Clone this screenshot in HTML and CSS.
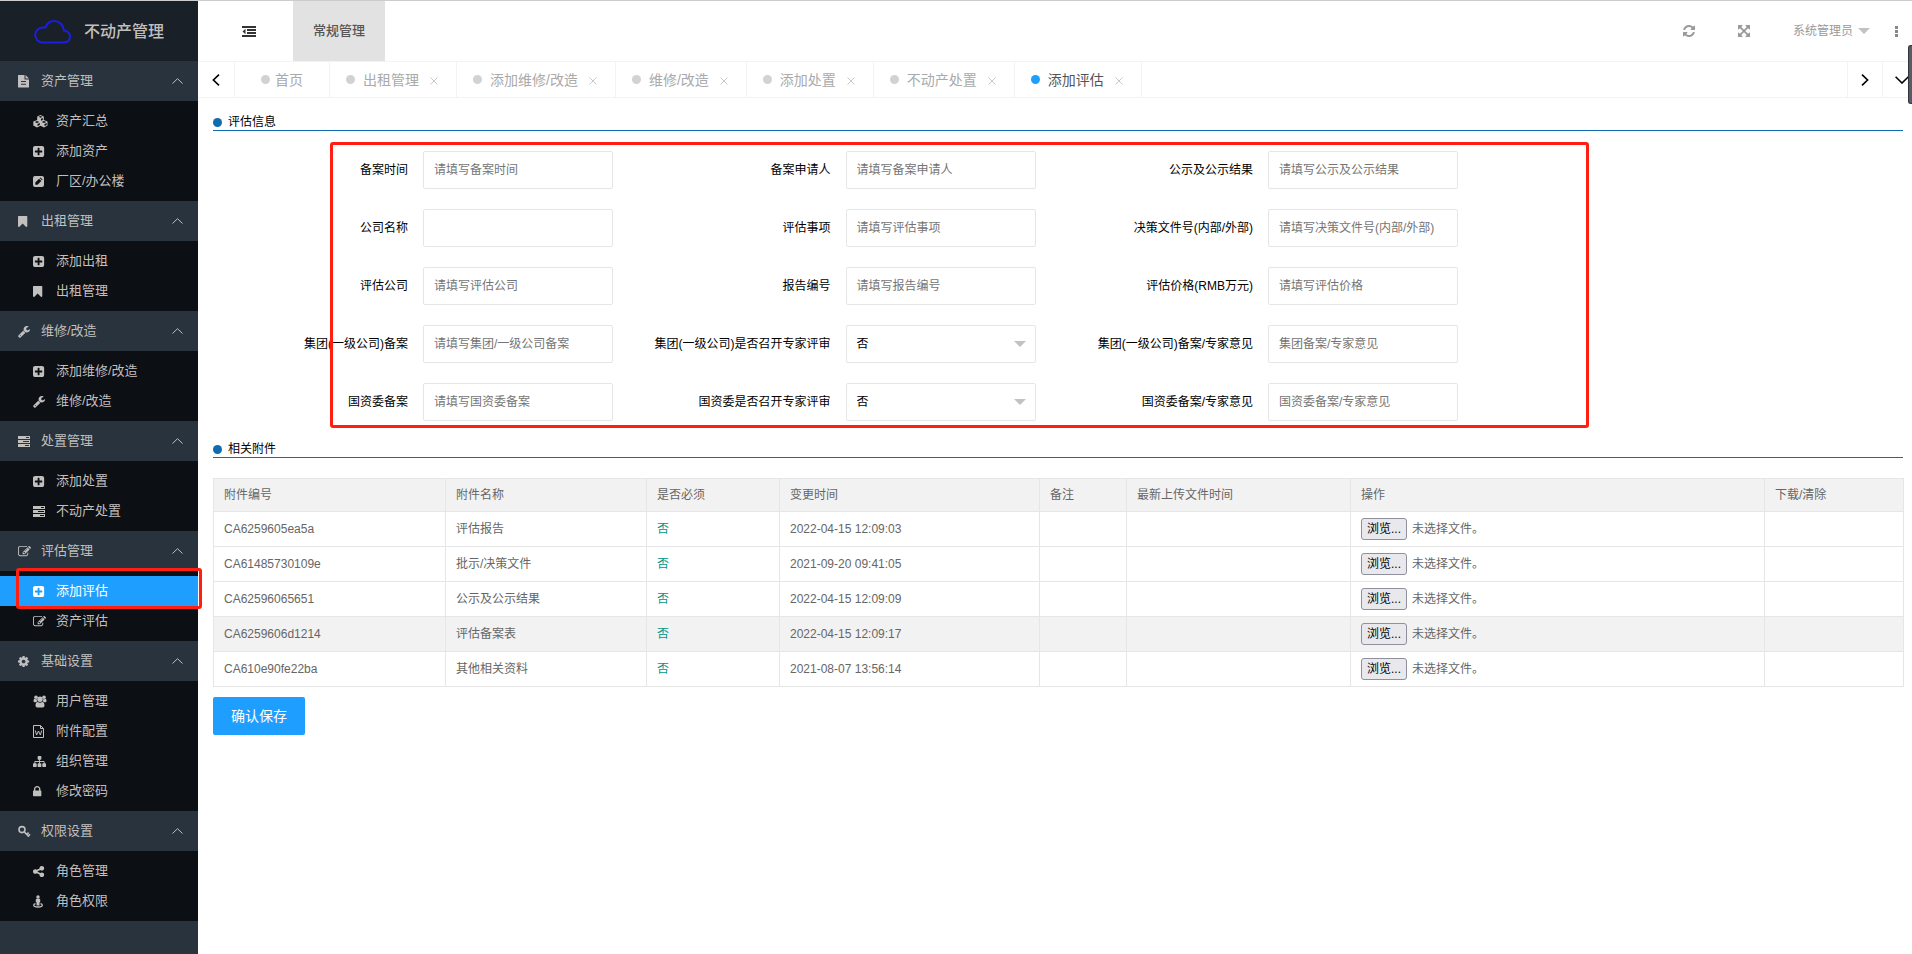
FILE: index.html
```html
<!DOCTYPE html>
<html lang="zh-CN">
<head>
<meta charset="utf-8">
<title>不动产管理</title>
<link rel="stylesheet" href="styles.css">
</head>
<body>
<svg class="sprite" aria-hidden="true">
  <symbol id="i-file" viewBox="0 0 13 13"><path fill-rule="evenodd" d="M0 .5Q0 0 .5 0H6.500V4Q6.500 4.500 7 4.500H11V12Q11 12.500 10.500 12.500H.5Q0 12.500 0 12zM7.500 0L11 3.500H7.500zM3 6V7H8V6zM3 8.800V9.800H8V8.800z"/></symbol>
  <symbol id="i-cubes" viewBox="0 0 15 13"><path fill-rule="evenodd" d="M7.500 0L10.800 1.400V5L14.500 6.600V10.500L11 12.400L7.500 10.700L4 12.400L.3 10.500V6.600L4.200 5V1.400zM7.500 1L5.500 1.800L7.500 2.700L9.500 1.800zM8 3.800V5.800L9.800 5V3zM4 5.900L1.800 6.900L4 7.900L6.200 6.900zM11 5.900L8.800 6.900L11 7.900L13.200 6.900zM4.500 8.900V11L6.800 9.900V7.900zM11.500 8.900V11L13.700 9.900V7.900z"/></symbol>
  <symbol id="i-plus" viewBox="128 0 1792 1792"><path d="M1408 960v-128q0-26-19-45t-45-19h-320v-320q0-26-19-45t-45-19h-128q-26 0-45 19t-19 45v320h-320q-26 0-45 19t-19 45v128q0 26 19 45t45 19h320v320q0 26 19 45t45 19h128q26 0 45-19t19-45v-320h320q26 0 45-19t19-45zm256-544v960q0 119-84.500 203.500t-203.500 84.500h-960q-119 0-203.500-84.500t-84.500-203.500v-960q0-119 84.500-203.500t203.500-84.500h960q119 0 203.500 84.500t84.500 203.500z"/></symbol>
  <symbol id="i-pencil" viewBox="0 0 13 13"><path fill-rule="evenodd" d="M2 1H9Q11 1 11 3V10Q11 12 9 12H2Q0 12 0 10V3Q0 1 2 1zM2.300 7.500V9.700H4.500L8.300 5.900L6.100 3.700zM6.700 3.100L8.900 5.300L9.600 4.600L7.400 2.400z"/></symbol>
  <symbol id="i-bookmark" viewBox="256 0 1792 1792"><path d="M1420 128q23 0 44 9 33 13 52.500 41t19.500 62v1289q0 34-19.500 62t-52.500 41q-19 8-44 8-48 0-83-32l-441-424-441 424q-36 33-83 33-23 0-44-9-33-13-52.500-41t-19.500-62v-1289q0-34 19.500-62t52.500-41q21-9 44-9h1048z"/></symbol>
  <symbol id="i-wrench" viewBox="64 0 1792 1792"><path d="M448 1472q0-26-19-45t-45-19-45 19-19 45 19 45 45 19 45-19 19-45zm644-420l-682 682q-37 37-90 37-52 0-91-37l-106-108q-38-36-38-90 0-53 38-91l681-681q39 98 114.500 173.500t173.500 114.500zm634-435q0 39-23 106-47 134-164.500 217.500t-258.500 83.500q-185 0-316.500-131.500t-131.500-316.500 131.500-316.500 316.500-131.500q58 0 121.500 16.500t107.500 46.500q16 11 16 28t-16 28l-293 169v224l193 107q5-3 79-48.500t135.500-81 70.500-35.500q15 0 23.500 10t8.500 25z"/></symbol>
  <symbol id="i-tasks" viewBox="0 0 13 13"><path fill-rule="evenodd" d="M0 1H12V4H0zM0 5H12V8H0zM0 9H12V12H0zM8 2V3H11V2zM5 6V7H11V6zM7 10V11H11V10z"/></symbol>
  <symbol id="i-edit" viewBox="0 0 1792 1792"><path d="M888 1184l116-116-152-152-116 116v56h96v96h56zm440-720q-16-16-33 1l-350 350q-17 17-1 33t33-1l350-350q17-17 1-33zm80 594v190q0 119-84.500 203.500t-203.500 84.500h-832q-119 0-203.500-84.500t-84.500-203.500v-832q0-119 84.500-203.500t203.500-84.500h832q63 0 117 25 15 7 18 23 3 17-9 29l-49 49q-14 14-32 8-23-6-45-6h-832q-66 0-113 47t-47 113v832q0 66 47 113t113 47h832q66 0 113-47t47-113v-126q0-13 9-22l64-64q15-15 35-7t20 29zm-96-738l288 288-672 672h-288v-288zm444 132l-92 92-288-288 92-92q28-28 68-28t68 28l152 152q28 28 28 68t-28 68z"/></symbol>
  <symbol id="i-cog" viewBox="128 0 1792 1792"><path d="M1152 896q0-106-75-181t-181-75-181 75-75 181 75 181 181 75 181-75 75-181zm512-109v222q0 12-8 23t-20 13l-185 28q-19 54-39 91 35 50 107 138 10 12 10 25t-9 23q-27 37-99 108t-94 71q-12 0-26-9l-138-108q-44 23-91 38-16 136-29 186-7 28-36 28h-222q-14 0-24.500-8.500t-11.500-21.500l-28-184q-49-16-90-37l-141 107q-10 9-25 9-14 0-25-11-126-114-165-168-7-10-7-23 0-12 8-23 15-21 51-66.500t54-70.500q-27-50-41-99l-183-27q-13-2-21-12.500t-8-23.500v-222q0-12 8-23t19-13l186-28q14-46 39-92-40-57-107-138-10-12-10-24 0-10 9-23 26-36 98.500-107.500t94.500-71.500q13 0 26 10l138 107q44-23 91-38 16-136 29-186 7-28 36-28h222q14 0 24.500 8.500t11.500 21.500l28 184q49 16 90 37l142-107q9-9 24-9 13 0 25 10 129 119 165 170 7 8 7 22 0 12-8 23-15 21-51 66.500t-54 70.500q26 50 41 98l183 28q13 2 21 12.500t8 23.500z"/></symbol>
  <symbol id="i-users" viewBox="0 0 14 13"><circle cx="6.500" cy="4.300" r="2.700"/><circle cx="2.500" cy="2.200" r="1.800"/><circle cx="10.500" cy="2.200" r="1.800"/><path d="M2 10.500C2 8 3 7 4.200 7Q6.500 8.600 8.800 7C10 7 11 8 11 10.500Q11 12.500 9.300 12.500H3.700Q2 12.500 2 10.500zM0 6Q0 3.800 1 3.800Q2.200 4.500 3.300 4.200Q3.300 5.500 4 6.400Q3 6.400 2.200 7.200H1.200Q0 7.200 0 6zM13 6Q13 3.800 12 3.800Q10.800 4.500 9.700 4.200Q9.700 5.500 9 6.400Q10 6.400 10.800 7.200H11.800Q13 7.200 13 6z"/></symbol>
  <symbol id="i-word" viewBox="0 0 13 13"><path fill="none" stroke="currentColor" d="M.5 .5H7.500L10.500 3.500V12.500H.5zM7.500 .5V3.500H10.500M2.300 5.500L3.600 10L5.500 6L7.400 10L8.700 5.500"/></symbol>
  <symbol id="i-sitemap" viewBox="0 0 1792 1792"><path d="M1792 1248v320q0 40-28 68t-68 28h-320q-40 0-68-28t-28-68v-320q0-40 28-68t68-28h96v-192h-512v192h96q40 0 68 28t28 68v320q0 40-28 68t-68 28h-320q-40 0-68-28t-28-68v-320q0-40 28-68t68-28h96v-192h-512v192h96q40 0 68 28t28 68v320q0 40-28 68t-68 28h-320q-40 0-68-28t-28-68v-320q0-40 28-68t68-28h96v-192q0-52 38-90t90-38h512v-192h-96q-40 0-68-28t-28-68v-320q0-40 28-68t68-28h320q40 0 68 28t28 68v320q0 40-28 68t-68 28h-96v192h512q52 0 90 38t38 90v192h96q40 0 68 28t28 68z"/></symbol>
  <symbol id="i-lock" viewBox="320 0 1792 1792"><path d="M640 768h512v-192q0-106-75-181t-181-75-181 75-75 181v192zm832 96v576q0 40-28 68t-68 28h-960q-40 0-68-28t-28-68v-576q0-40 28-68t68-28h32v-192q0-184 132-316t316-132 316 132 132 316v192h32q40 0 68 28t28 68z"/></symbol>
  <symbol id="i-key" viewBox="0 0 13 13"><g fill="none" stroke="currentColor" stroke-width="1.600"><circle cx="4" cy="4.600" r="3"/><path d="M6.100 6.700L11 11.600M10.600 7.600L8.400 9.700M12 9.300L10.200 11.100"/></g></symbol>
  <symbol id="i-share" viewBox="128 0 1792 1792"><path d="M1344 1024q133 0 226.500 93.500t93.500 226.500-93.500 226.500-226.500 93.500-226.500-93.500-93.500-226.500q0-12 2-34l-360-180q-92 86-218 86-133 0-226.500-93.500t-93.500-226.500 93.500-226.500 226.500-93.500q126 0 218 86l360-180q-2-22-2-34 0-133 93.500-226.500t226.500-93.500 226.500 93.500 93.500 226.500-93.500 226.500-226.500 93.500q-126 0-218-86l-360 180q2 22 2 34t-2 34l360 180q92-86 218-86z"/></symbol>
  <symbol id="i-street" viewBox="0 0 13 13"><circle cx="5" cy="2" r="1.700"/><path d="M3.600 3.800H6.400Q7.200 3.800 7.200 4.600V7.300H6.500V10.500H3.500V7.300H2.800V4.600Q2.800 3.800 3.600 3.800z"/><path fill="none" stroke="currentColor" stroke-width="1.300" d="M2.500 8.700Q.7 9.200 .7 10.200C.7 12.600 9.300 12.600 9.300 10.200Q9.300 9.200 7.500 8.700"/></symbol>
  <symbol id="i-outdent" viewBox="0 0 14 12"><path d="M0 0H14V2H0zM5 3H14V5H5zM5 6H14V8H5zM0 9H14V11H0zM3.500 2.800V8.200L.5 5.500z"/></symbol>
  <symbol id="i-refresh" viewBox="128 128 1536 1536"><path d="M1639 1056q0 5-1 7-64 268-268 434.500t-478 166.500q-146 0-282.500-55t-243.500-157l-129 129q-19 19-45 19t-45-19-19-45v-448q0-26 19-45t45-19h448q26 0 45 19t19 45-19 45l-137 137q71 66 161 102t187 36q134 0 250-65t186-179q11-17 53-117 8-23 30-23h192q13 0 22.500 9.500t9.500 22.500zm25-800v448q0 26-19 45t-45 19h-448q-26 0-45-19t-19-45 19-45l138-138q-148-137-349-137-134 0-250 65t-186 179q-11 17-53 117-8 23-30 23h-199q-13 0-22.500-9.500t-9.500-22.500v-7q65-268 270-434.500t480-166.500q146 0 284 55.500t245 156.500l130-129q19-19 45-19t45 19 19 45z"/></symbol>
  <symbol id="i-expand" viewBox="128 128 1536 1536"><path d="M1411 541l-355 355 355 355 144-144q29-31 70-14 39 17 39 59v448q0 26-19 45t-45 19h-448q-42 0-59-40-17-39 14-69l144-144-355-355-355 355 144 144q31 30 14 69-17 40-59 40h-448q-26 0-45-19t-19-45v-448q0-42 40-59 39-17 69 14l144 144 355-355-355-355-144 144q-19 19-45 19-12 0-24-5-40-17-40-59v-448q0-26 19-45t45-19h448q42 0 59 40 17 39-14 69l-144 144 355 355 355-355-144-144q-31-30-14-69 17-40 59-40h448q26 0 45 19t19 45v448q0 42-39 59-13 5-25 5-26 0-45-19z"/></symbol>
  <symbol id="i-up" viewBox="0 0 11 6"><path fill="none" stroke="currentColor" d="M.5 5.500L5.500 .7L10.500 5.500"/></symbol>
  <symbol id="i-left" viewBox="0 0 8 12"><path fill="none" stroke="currentColor" stroke-width="1.600" d="M7 .6L1.400 6L7 11.400"/></symbol>
  <symbol id="i-right" viewBox="0 0 8 12"><path fill="none" stroke="currentColor" stroke-width="1.600" d="M1 .6L6.600 6L1 11.400"/></symbol>
  <symbol id="i-down" viewBox="0 0 14 8"><path fill="none" stroke="currentColor" stroke-width="1.600" d="M.6 .8L7 7L13.400 .8"/></symbol>
  <symbol id="i-close" viewBox="0 0 8 8"><path fill="none" stroke="currentColor" d="M.5 .5L7.500 7.500M7.500 .5L.5 7.500"/></symbol>
</svg>

<div class="app">
  <aside class="sidebar">
    <div class="logo">
      <svg class="cloud" viewBox="0 0 37 24"><path d="M9 22.500A7.500 7.500 0 0 1 8.500 7.500Q10 7 11.500 7.500C13 3.500 16 1 20 1C25.500 1 29.500 5 30 10.500C33.500 11 36 13.500 36 16.600Q36 22.500 29.500 22.500z"/></svg>
      <span>不动产管理</span>
    </div>
    <nav class="menu">
      <a class="group" href="#"><svg class="icon"><use href="#i-file"/></svg><span>资产管理</span><svg class="chevron"><use href="#i-up"/></svg></a>
      <div class="items">
        <a href="#"><svg class="icon wide"><use href="#i-cubes"/></svg>资产汇总</a>
        <a href="#"><svg class="icon"><use href="#i-plus"/></svg>添加资产</a>
        <a href="#"><svg class="icon"><use href="#i-pencil"/></svg>厂区/办公楼</a>
      </div>
      <a class="group" href="#"><svg class="icon"><use href="#i-bookmark"/></svg><span>出租管理</span><svg class="chevron"><use href="#i-up"/></svg></a>
      <div class="items">
        <a href="#"><svg class="icon"><use href="#i-plus"/></svg>添加出租</a>
        <a href="#"><svg class="icon"><use href="#i-bookmark"/></svg>出租管理</a>
      </div>
      <a class="group" href="#"><svg class="icon"><use href="#i-wrench"/></svg><span>维修/改造</span><svg class="chevron"><use href="#i-up"/></svg></a>
      <div class="items">
        <a href="#"><svg class="icon"><use href="#i-plus"/></svg>添加维修/改造</a>
        <a href="#"><svg class="icon"><use href="#i-wrench"/></svg>维修/改造</a>
      </div>
      <a class="group" href="#"><svg class="icon"><use href="#i-tasks"/></svg><span>处置管理</span><svg class="chevron"><use href="#i-up"/></svg></a>
      <div class="items">
        <a href="#"><svg class="icon"><use href="#i-plus"/></svg>添加处置</a>
        <a href="#"><svg class="icon"><use href="#i-tasks"/></svg>不动产处置</a>
      </div>
      <a class="group" href="#"><svg class="icon"><use href="#i-edit"/></svg><span>评估管理</span><svg class="chevron"><use href="#i-up"/></svg></a>
      <div class="items">
        <a class="active" href="#"><svg class="icon"><use href="#i-plus"/></svg>添加评估<i class="mark mark-item"></i></a>
        <a href="#"><svg class="icon"><use href="#i-edit"/></svg>资产评估</a>
      </div>
      <a class="group" href="#"><svg class="icon"><use href="#i-cog"/></svg><span>基础设置</span><svg class="chevron"><use href="#i-up"/></svg></a>
      <div class="items">
        <a href="#"><svg class="icon wide"><use href="#i-users"/></svg>用户管理</a>
        <a href="#"><svg class="icon"><use href="#i-word"/></svg>附件配置</a>
        <a href="#"><svg class="icon"><use href="#i-sitemap"/></svg>组织管理</a>
        <a href="#"><svg class="icon"><use href="#i-lock"/></svg>修改密码</a>
      </div>
      <a class="group" href="#"><svg class="icon"><use href="#i-key"/></svg><span>权限设置</span><svg class="chevron"><use href="#i-up"/></svg></a>
      <div class="items">
        <a href="#"><svg class="icon"><use href="#i-share"/></svg>角色管理</a>
        <a href="#"><svg class="icon"><use href="#i-street"/></svg>角色权限</a>
      </div>
    </nav>
  </aside>

  <div class="page">
    <header class="topbar">
      <button class="fold" type="button" aria-label="收起菜单"><svg><use href="#i-outdent"/></svg></button>
      <a class="module" href="#">常规管理</a>
      <div class="tools">
        <button type="button" aria-label="刷新"><svg><use href="#i-refresh"/></svg></button>
        <button type="button" aria-label="全屏"><svg><use href="#i-expand"/></svg></button>
        <a class="user" href="#">系统管理员<i class="caret"></i></a>
        <button class="more" type="button" aria-label="更多"><i></i><i></i><i></i></button>
      </div>
    </header>

    <div class="tabs">
      <button class="arrow" type="button" aria-label="向左"><svg class="side"><use href="#i-left"/></svg></button>
      <a class="tab home" href="#"><i class="dot"></i>首页</a>
      <a class="tab" href="#"><i class="dot"></i>出租管理<svg class="close"><use href="#i-close"/></svg></a>
      <a class="tab" href="#"><i class="dot"></i>添加维修/改造<svg class="close"><use href="#i-close"/></svg></a>
      <a class="tab" href="#"><i class="dot"></i>维修/改造<svg class="close"><use href="#i-close"/></svg></a>
      <a class="tab" href="#"><i class="dot"></i>添加处置<svg class="close"><use href="#i-close"/></svg></a>
      <a class="tab" href="#"><i class="dot"></i>不动产处置<svg class="close"><use href="#i-close"/></svg></a>
      <a class="tab current" href="#"><i class="dot"></i>添加评估<svg class="close"><use href="#i-close"/></svg></a>
      <button class="arrow next" type="button" aria-label="向右"><svg class="side"><use href="#i-right"/></svg></button>
      <button class="arrow list" type="button" aria-label="标签操作"><svg class="down"><use href="#i-down"/></svg></button>
      <i class="handle"></i>
    </div>

    <main class="content">
      <h2 class="title">评估信息</h2>
      <form class="fields">
        <div class="field"><label for="f1">备案时间</label><input id="f1" type="text" placeholder="请填写备案时间"></div>
        <div class="field"><label for="f2">备案申请人</label><input id="f2" type="text" placeholder="请填写备案申请人"></div>
        <div class="field"><label for="f3">公示及公示结果</label><input id="f3" type="text" placeholder="请填写公示及公示结果"></div>
        <div class="field first"><label for="f4">公司名称</label><input id="f4" type="text"></div>
        <div class="field"><label for="f5">评估事项</label><input id="f5" type="text" placeholder="请填写评估事项"></div>
        <div class="field"><label for="f6">决策文件号(内部/外部)</label><input id="f6" type="text" placeholder="请填写决策文件号(内部/外部)"></div>
        <div class="field first"><label for="f7">评估公司</label><input id="f7" type="text" placeholder="请填写评估公司"></div>
        <div class="field"><label for="f8">报告编号</label><input id="f8" type="text" placeholder="请填写报告编号"></div>
        <div class="field"><label for="f9">评估价格(RMB万元)</label><input id="f9" type="text" placeholder="请填写评估价格"></div>
        <div class="field first"><label for="f10">集团(一级公司)备案</label><input id="f10" type="text" placeholder="请填写集团/一级公司备案"></div>
        <div class="field"><label for="f11">集团(一级公司)是否召开专家评审</label><div class="select"><select id="f11"><option>否</option><option>是</option></select><i class="caret"></i></div></div>
        <div class="field"><label for="f12">集团(一级公司)备案/专家意见</label><input id="f12" type="text" placeholder="集团备案/专家意见"></div>
        <div class="field first"><label for="f13">国资委备案</label><input id="f13" type="text" placeholder="请填写国资委备案"></div>
        <div class="field"><label for="f14">国资委是否召开专家评审</label><div class="select"><select id="f14"><option>否</option><option>是</option></select><i class="caret"></i></div></div>
        <div class="field"><label for="f15">国资委备案/专家意见</label><input id="f15" type="text" placeholder="国资委备案/专家意见"></div>
        <i class="mark mark-form"></i>
      </form>

      <h2 class="title">相关附件</h2>
      <table class="files">
        <colgroup><col class="c-id"><col class="c-name"><col class="c-need"><col class="c-time"><col class="c-note"><col class="c-last"><col class="c-op"><col class="c-down"></colgroup>
        <thead><tr><th>附件编号</th><th>附件名称</th><th>是否必须</th><th>变更时间</th><th>备注</th><th>最新上传文件时间</th><th>操作</th><th>下载/清除</th></tr></thead>
        <tbody>
          <tr><td>CA6259605ea5a</td><td>评估报告</td><td class="no">否</td><td>2022-04-15 12:09:03</td><td></td><td></td><td><div class="upload"><button type="button">浏览...</button><span>未选择文件。</span></div></td><td></td></tr>
          <tr><td>CA61485730109e</td><td>批示/决策文件</td><td class="no">否</td><td>2021-09-20 09:41:05</td><td></td><td></td><td><div class="upload"><button type="button">浏览...</button><span>未选择文件。</span></div></td><td></td></tr>
          <tr><td>CA62596065651</td><td>公示及公示结果</td><td class="no">否</td><td>2022-04-15 12:09:09</td><td></td><td></td><td><div class="upload"><button type="button">浏览...</button><span>未选择文件。</span></div></td><td></td></tr>
          <tr class="hover"><td>CA6259606d1214</td><td>评估备案表</td><td class="no">否</td><td>2022-04-15 12:09:17</td><td></td><td></td><td><div class="upload"><button type="button">浏览...</button><span>未选择文件。</span></div></td><td></td></tr>
          <tr><td>CA610e90fe22ba</td><td>其他相关资料</td><td class="no">否</td><td>2021-08-07 13:56:14</td><td></td><td></td><td><div class="upload"><button type="button">浏览...</button><span>未选择文件。</span></div></td><td></td></tr>
        </tbody>
      </table>
      <button class="save" type="button">确认保存</button>
    </main>
  </div>
</div>
</body>
</html>
```

FILE: styles.css
```css
* { box-sizing: border-box; }
body {
  margin: 0;
  font: 12px/16px "Liberation Sans", "Noto Sans CJK SC", sans-serif;
  color: #000;
  background: #fff;
}
a { color: inherit; text-decoration: none; }
button, input, select { font: inherit; color: inherit; margin: 0; }
button { padding: 0; border: 0; background: none; cursor: pointer; }
svg { display: block; fill: currentColor; flex: none; }
i { display: block; flex: none; }
.sprite { display: none; }

.app {
  display: flex;
  min-height: 100vh;
  border-top: 1px solid #ccc;
}

/* Sidebar */
.sidebar {
  flex: none;
  width: 198px;
  background: #28333e;
  color: #c2bfbf;
}
.logo {
  display: flex;
  align-items: center;
  gap: 13px;
  height: 60px;
  padding: 2px 0 0 34px;
  background: #192027;
  font-size: 16px;
  font-weight: 500;
}
.cloud {
  width: 37px;
  height: 24px;
  fill: none;
  stroke: #1e1ee0;
  stroke-width: 2;
}
.menu { font-size: 13px; }
.menu a { display: flex; align-items: center; }
.group { height: 40px; padding: 0 15px 0 18px; }
.icon { width: 13px; height: 13px; margin-right: 10px; }
.icon.wide { width: 15px; margin-right: 8px; }
.chevron { width: 11px; height: 6px; margin-left: auto; }
.items { padding: 5px 0; background: #0c0f13; }
.items a { height: 30px; padding-left: 33px; }
.items .active { position: relative; background: #1e9fff; color: #fff; }

/* Top bar */
.page { flex: 1; min-width: 0; }
.topbar { display: flex; height: 60px; }
.fold { width: 95px; padding: 2px 35px 0 44px; color: #333; }
.fold svg { width: 14px; height: 12px; }
.module {
  display: flex;
  align-items: center;
  padding: 0 20px;
  background: #e2e2e2;
  color: #555;
  font-size: 13px;
  font-weight: 500;
}
.tools {
  display: flex;
  align-items: center;
  margin-left: auto;
  padding-right: 14px;
  color: #999;
}
.tools svg { width: 12px; height: 12px; margin-right: 43px; }
.user { display: flex; align-items: center; gap: 5px; }
.caret {
  border: 6px solid transparent;
  border-top-color: #c2c2c2;
  border-bottom: 0;
}
.more { display: grid; gap: 1px; margin-left: 25px; }
.more i { width: 3px; height: 3px; background: #888; }

/* Page tabs */
.tabs {
  position: relative;
  display: flex;
  height: 37px;
  border: solid #f3f3f3;
  border-width: 1px 0;
}
.arrow {
  display: grid;
  place-items: center;
  width: 37px;
  border-right: 1px solid #f3f3f3;
}
.side { width: 8px; height: 12px; }
.down { width: 14px; height: 8px; }
.next { width: 36px; margin-left: auto; border-left: 1px solid #f3f3f3; }
.list { width: 29px; padding-left: 8px; border-right: 0; }
.tab {
  display: flex;
  align-items: center;
  padding: 0 18px 0 16px;
  border-right: 1px solid #f3f3f3;
  color: #aaa;
  font-size: 14px;
}
.dot {
  width: 9px;
  height: 9px;
  margin-right: 8px;
  border-radius: 50%;
  background: #d2d2d2;
}
.home { padding: 0 26px; }
.home .dot { margin-right: 5px; }
.close { width: 8px; height: 8px; margin: 2px 0 0 11px; color: #c8c8c8; }
.current { color: #555; }
.current .dot { background: #1e9fff; }
.handle {
  position: absolute;
  top: -17px;
  right: 0;
  width: 4px;
  height: 59px;
  border: 1px solid #34343f;
  border-right: 0;
  border-radius: 3px 0 0 3px;
  background: #5a5a66;
}

/* Form */
.content { padding: 16px 9px 20px 15px; }
.title {
  display: flex;
  align-items: center;
  gap: 6px;
  margin: 0;
  border-bottom: 1px solid #0f6cb0;
  font-size: 12px;
  font-weight: 400;
}
.title::before {
  content: "";
  width: 9px;
  height: 9px;
  border-radius: 50%;
  background: #0f6cb0;
}
.fields {
  position: relative;
  display: grid;
  grid-template-columns: repeat(4, 1fr);
  gap: 20px 0;
  padding: 20px 0;
}
.first { grid-column-start: 1; }
.field { display: flex; align-items: center; }
.field label {
  flex: none;
  width: 210px;
  padding-right: 15px;
  text-align: right;
  white-space: nowrap;
}
.field input, .select { flex: none; width: 190px; height: 38px; }
.field input, .field select {
  padding: 0 10px;
  border: 1px solid #e6e6e6;
  border-radius: 2px;
  background: #fff;
  outline: 0;
}
.field input::placeholder { color: #757575; }
.select { position: relative; }
.select select { width: 100%; height: 100%; appearance: none; }
.select .caret {
  position: absolute;
  top: 16px;
  right: 10px;
  pointer-events: none;
}

/* Attachments */
.files {
  width: 100%;
  margin: 20px 0 10px;
  border-collapse: collapse;
  table-layout: fixed;
  color: #666;
}
.c-id { width: 232px; }
.c-name { width: 201px; }
.c-need { width: 133px; }
.c-time { width: 260px; }
.c-note { width: 87px; }
.c-last { width: 224px; }
.c-op { width: 414px; }
.c-down { width: 139px; }
.files th, .files td {
  height: 35px;
  padding: 0 10px;
  border: 1px solid #e6e6e6;
  text-align: left;
  font-weight: 400;
}
.files th { height: 33px; }
.files th, .hover { background: #f2f2f2; }
.files .no { color: #009688; }
.upload { display: flex; align-items: center; gap: 5px; }
.upload button {
  height: 22px;
  padding: 0 5px;
  border: 1px solid #8f8f9d;
  border-radius: 3px;
  background: #e9e9ed;
  color: #000;
}
.save {
  height: 38px;
  padding: 0 18px;
  border-radius: 2px;
  background: #1e9fff;
  color: #fff;
  font-size: 14px;
}

/* Highlight frames */
.mark {
  position: absolute;
  border: 3px solid #ff1e10;
  border-radius: 3px;
  pointer-events: none;
}
.mark-item { z-index: 1; top: -8px; right: -4px; bottom: -3px; left: 16px; }
.mark-form { top: 11px; right: 314px; bottom: 13px; left: 117px; }
```
